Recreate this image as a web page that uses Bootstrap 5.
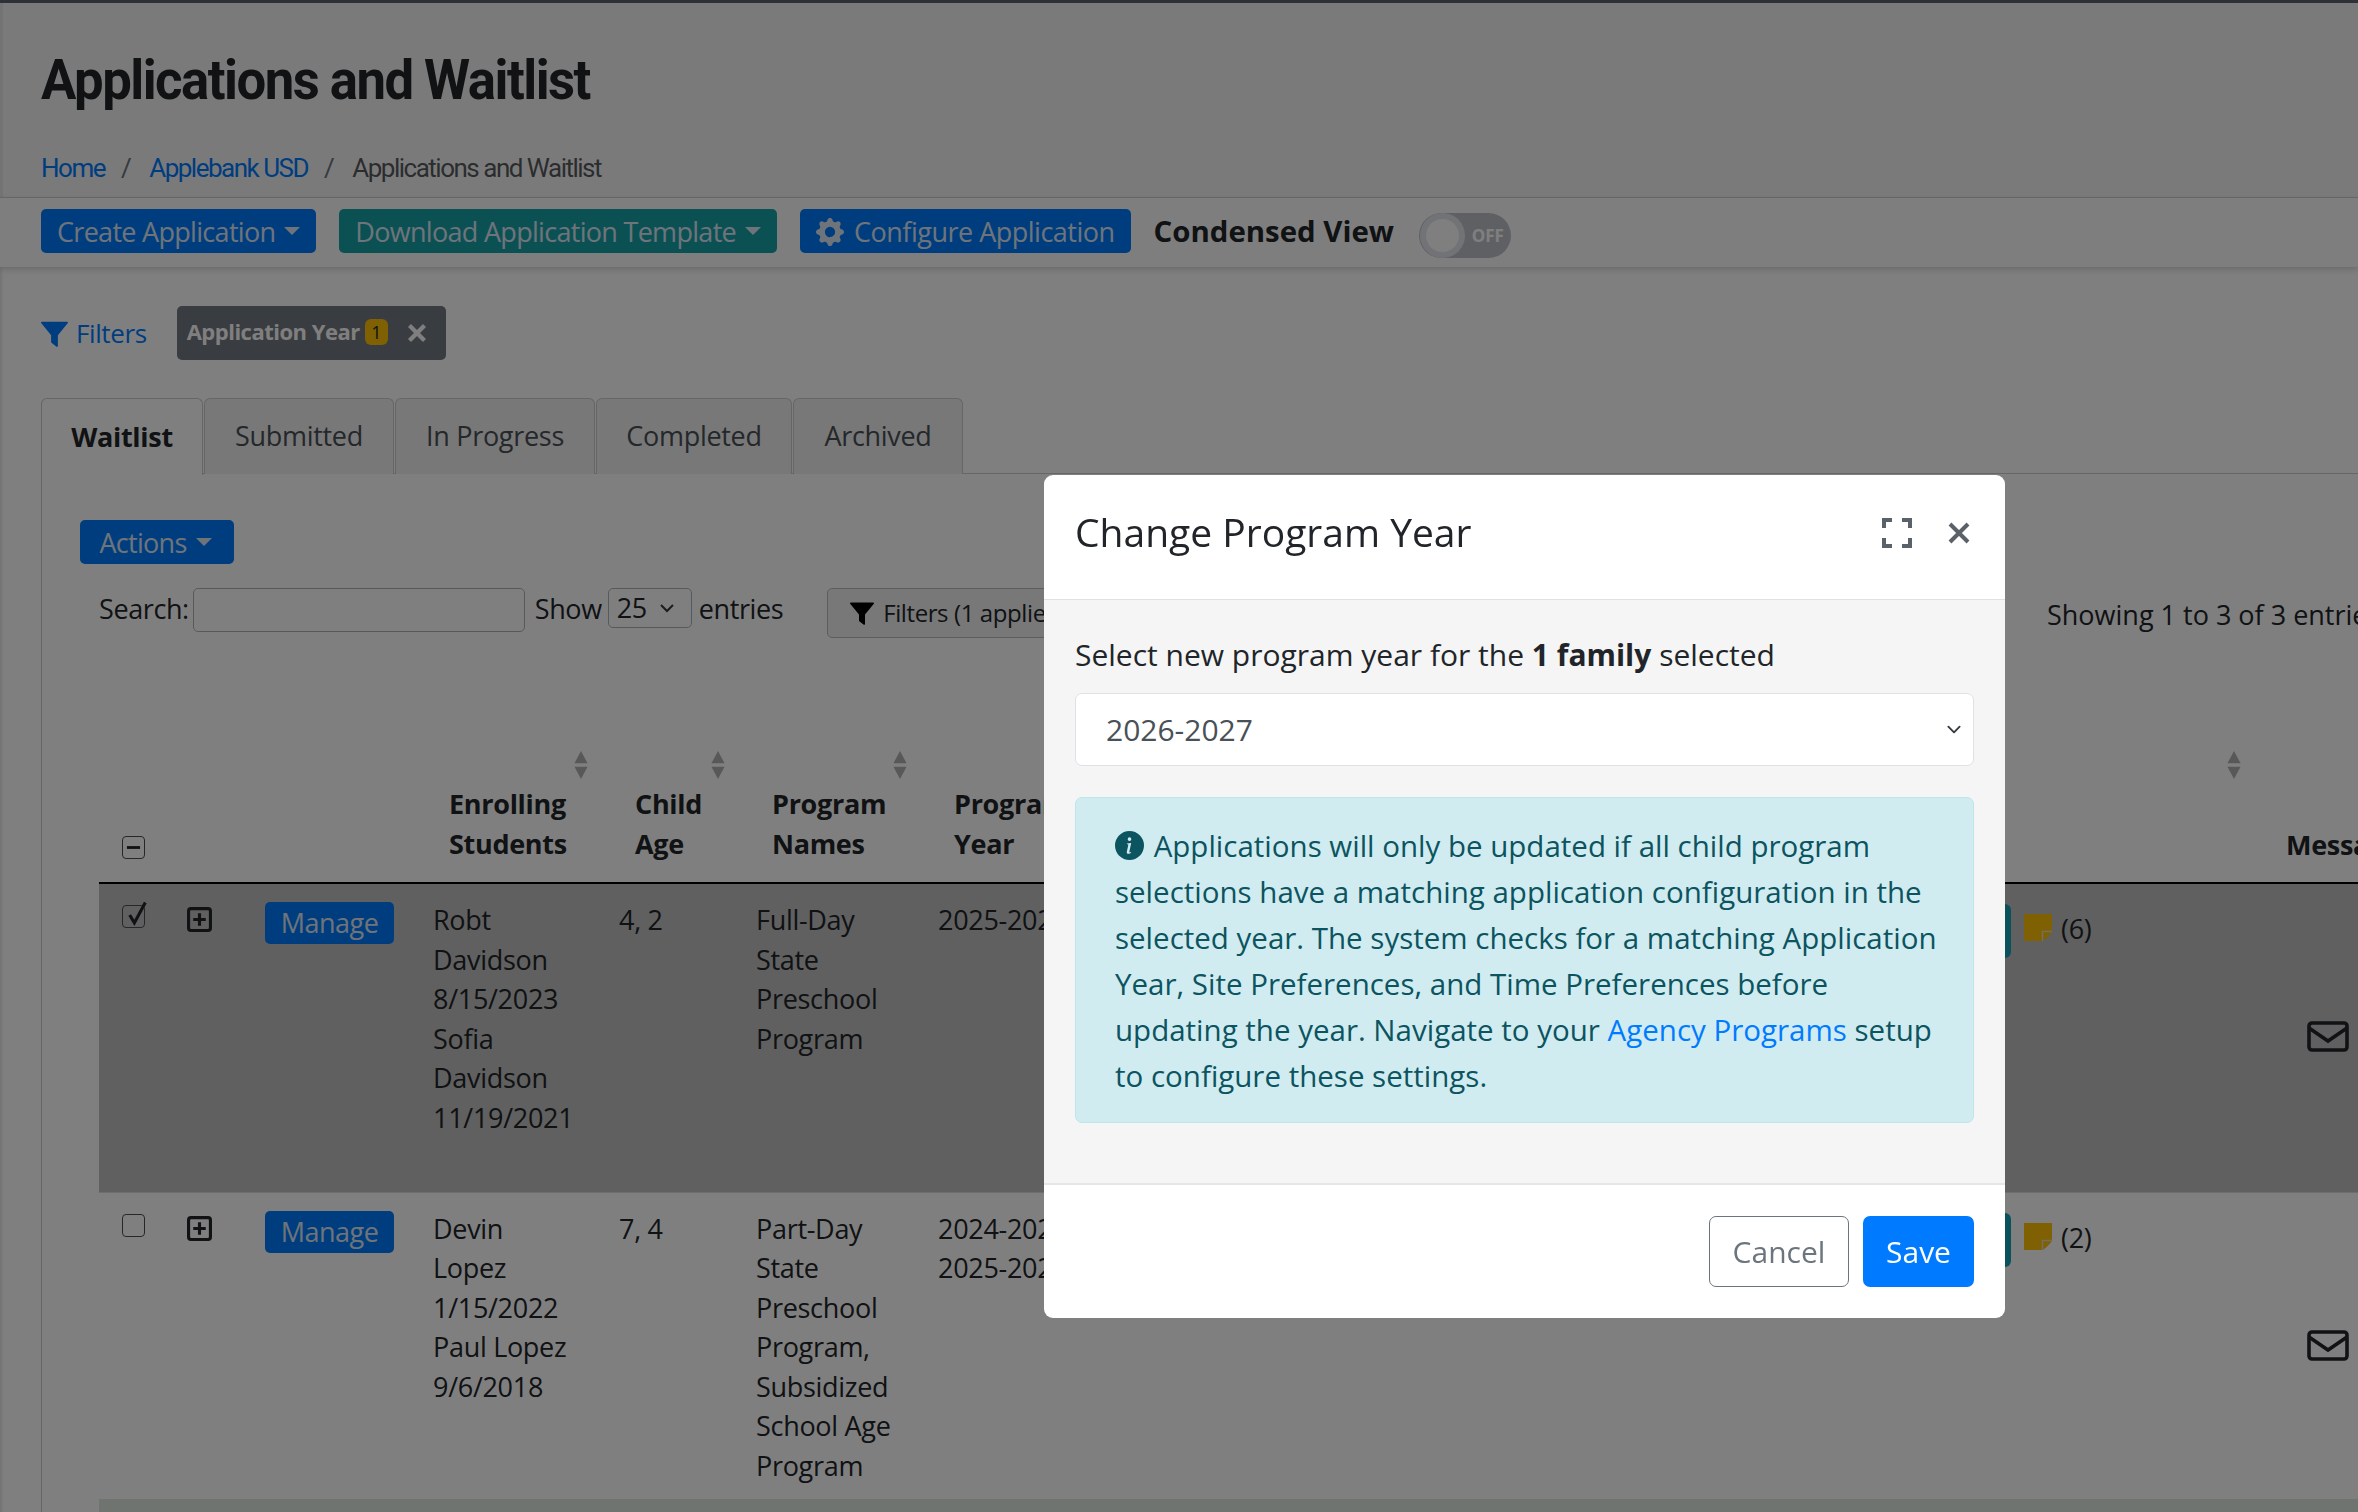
<!DOCTYPE html>
<html lang="en">
<head>
    <meta charset="UTF-8">
    <title>Applications and Waitlist</title>
    <link href="https://cdn.jsdelivr.net/npm/bootstrap@5.3.0/dist/css/bootstrap.min.css" rel="stylesheet">
    <style>
        html, body { height: 100%; overflow: hidden; }
        body { background: #fff; color: #212529; font-family: "Open Sans", "Noto Sans", sans-serif; font-size: 27px; letter-spacing: -.3px; }
        .top-strip { height: 3px; background: #5c6470; }
        .page-head { background: #f5f5f5; padding: 45px 41px 0 38px; height: 194px; border-left: 3px solid #e6e6e6; }
        .page-title { font-family: Roboto, sans-serif; font-weight: 700; font-size: 56px; letter-spacing: -1.6px; margin: 0; line-height: 64px; transform: scaleX(.94); transform-origin: left; white-space: nowrap; }
        .crumbs { margin: 37px 0 0; font-family: Roboto, sans-serif; font-size: 26px; --bs-breadcrumb-divider-color: #6c757d; letter-spacing: -1.5px; }
        .crumbs a { text-decoration: none; color: #007bff; }
        .crumbs .breadcrumb-item + .breadcrumb-item { padding-left: 16px; }
        .crumbs .breadcrumb-item + .breadcrumb-item::before { padding-right: 19px; }
        .tool-bar { background: #fdfdfd; border-top: 1px solid #ccc; height: 70px; padding: 11px 41px 0; gap: 23px; box-shadow: 0 3px 6px rgba(0,0,0,.15); position: relative; }
        .btn-app { font-size: 27px; letter-spacing: -.7px; line-height: 36px; padding: 5px 16px 3px; border-radius: 5px; background: #007bff; border: 0; color: #dfe8f5; height: 44px; white-space: nowrap; }
        .btn-app.dropdown-toggle::after { margin-left: 9px; }
        .btn-tealish { background: #17a2a8; }
        .btn-config { letter-spacing: -.5px; gap: 10px; }
        .condensed-label { font-weight: 700; font-size: 29.4px; letter-spacing: 0; }
        .off-toggle { width: 92px; height: 45px; border-radius: 23px; background: #bfc1c8; margin-left: 2px; margin-top: 4px; padding: 0 7px; color: #fff; font-size: 17px; font-weight: 700; overflow: hidden; letter-spacing: 0; }
        .off-knob { width: 33px; height: 33px; border-radius: 50%; background: #fff; box-shadow: 0 0 0 6px #e4e6ec; }
        .main-area { padding: 39px 0 0 41px; box-shadow: inset 3px 0 3px -1px rgba(0,0,0,.1); }
        .filter-row { height: 54px; gap: 30px; }
        .filter-link { color: #007bff; font-size: 26px; letter-spacing: -.4px; gap: 8px; }
        .chip { background: #737880; color: #fff; font-weight: 700; font-size: 22px; letter-spacing: -.5px; height: 54px; width: 269px; border-radius: 5px; padding: 0 10px; gap: 5px; white-space: nowrap; }
        .chip-label { margin-top: -4px; }
        .chip-num { background: #ffc107; color: #212529; font-size: 18px; font-weight: 400; width: 23px; height: 26px; border-radius: 6px; flex: none; margin-top: -2px; }
        .chip-close { margin-left: 14px; }
        .tab-strip { margin-top: 38px; border-bottom: 1px solid #ccc; gap: 1px; height: 76px; }
        .tab-item { background: #f0f0f0; border: 1px solid #ccc; border-bottom: 0; border-radius: 6px 6px 0 0; height: 76px; color: #495057; }
        .tab-item.is-on { background: #fff; font-weight: 700; color: #212529; height: 77px; position: relative; }
        .tab-body { border-left: 1px solid #ccc; padding: 46px 0 0 38px; }
        .btn-actions { width: 154px; padding-left: 13px; margin-bottom: 1px; }
        .search-row { margin: 23px 0 0 19px; height: 48px; letter-spacing: -.4px; line-height: 42px; }
        .search-box { width: 332px; height: 44px; border: 1px solid #adb5bd; border-radius: 5px; margin: 0 10px 0 4px; background: transparent; }
        .length-box { width: 84px; height: 40px; border: 1px solid #adb5bd; border-radius: 5px; margin: 0 7px 0 6px; padding: 0 8px; gap: 12px; }
        .filter-btn { height: 50px; width: 400px; margin-left: 44px; border: 1px solid #bbb; border-radius: 5px; background: #f0f0f0; padding: 0 22px; font-size: 24px; gap: 9px; white-space: nowrap; }
        .showing-text { position: absolute; left: 2047px; top: 595px; white-space: nowrap; letter-spacing: 0; }
        .app-table { width: 2400px; table-layout: fixed; margin: 50px 0 0 19px; border-collapse: collapse; }
        .app-table th { font-weight: 700; vertical-align: bottom; padding: 0 0 18px 0; line-height: 40px; height: 197px; border-bottom: 2px solid #000; position: relative; }
        .app-table td { vertical-align: top; line-height: 39.5px; padding: 16px 0 0 0; }
        .row-picked td { background: #c0c0c0; height: 309px; }
        .row-plain td { height: 307px; border-top: 1px solid #ddd; }
        .row-next td { background: #dfe9e1; height: 40px; }
        .sort-mark { position: absolute; top: 65px; width: 16px; height: 28px; }
        .tick-box { display: block; width: 23px; height: 23px; margin: 5px 0 0 23px; border: 1px solid #495057; border-radius: 4px; position: relative; }
        .head-box { margin: 0 0 5px 23px; }
        .plus-mark { display: block; margin: 7px 0 0 22px; }
        .btn-manage { width: 129px; height: 42px; padding: 0; line-height: 42px; margin-top: 2px; letter-spacing: -.5px; }
        .note-mark { position: absolute; left: 1086px; top: 30px; width: 28px; height: 27px; }
        .note-count { position: absolute; left: 1123px; top: 25px; }
        .teal-edge { position: absolute; left: 1052px; top: 20px; width: 21px; height: 54px; background: #17a2b8; border-radius: 6px; }
        .mail-mark { position: absolute; left: 1369px; top: 137px; width: 42px; height: 31px; }
        .modal-backdrop { --bs-backdrop-opacity: .5; }
        .modal-spot { --bs-modal-width: 961px; letter-spacing: 0; }
        .modal-spot .modal-dialog { margin: 475px 0 0 1044px; max-width: 961px; }
        .modal-spot .modal-content { border-radius: 9px; border: 0; }
        .spot-head { height: 125px; padding: 0 31px 9px; border-bottom: 1px solid #dee2e6; }
        .spot-title { font-size: 39px; font-weight: 500; margin: 0; }
        .spot-body { background: #f5f5f5; height: 583px; padding: 35px 31px 0; }
        .spot-lead { margin: 0 0 18px; line-height: 40px; font-size: 30px; }
        .year-select { height: 73px; font-size: 30px; padding: 0 30px; border-color: #dee2e6; border-radius: 7px; background-size: 20px 15px; background-position: right 9px center; color: #495057; }
        .info-box { margin: 31px 0 0; padding: 25px 25px 0 39px; height: 326px; line-height: 46px; font-size: 29.5px; border-radius: 7px; background: #d1ecf1; border-color: #bee5eb; color: #0c5460; }
        .info-box a { color: #007bff; text-decoration: none; }
        .info-dot { margin-right: 2px; vertical-align: -3px; }
        .spot-foot { height: 135px; padding: 0 31px 0 0; border-top: 2px solid #e6e6ea; gap: 14px; }
        .btn-cancel, .btn-save { height: 71px; font-size: 30px; border-radius: 7px; }
        .btn-cancel { width: 140px; color: #6c757d; border: 1px solid #6c757d; background: #fff; }
        .btn-save { width: 111px; color: #fff; background: #007bff; border: 0; }
    </style>
</head>
<body>
    <div class="top-strip"></div>
    <div class="page-head">
        <h1 class="page-title">Applications and Waitlist</h1>
        <nav>
            <ol class="breadcrumb crumbs">
                <li class="breadcrumb-item"><a href="#">Home</a></li>
                <li class="breadcrumb-item"><a href="#">Applebank USD</a></li>
                <li class="breadcrumb-item active">Applications and Waitlist</li>
            </ol>
        </nav>
    </div>
    <div class="tool-bar d-flex align-items-start">
        <button class="btn-app dropdown-toggle">Create Application</button>
        <button class="btn-app btn-tealish dropdown-toggle">Download Application Template</button>
        <button class="btn-app btn-config d-flex align-items-center">
            <svg width="28" height="28" viewBox="0 0 16 16" fill="currentColor"><path d="M9.405 1.05c-.413-1.4-2.397-1.4-2.81 0l-.1.34a1.464 1.464 0 0 1-2.105.872l-.31-.17c-1.283-.698-2.686.705-1.987 1.987l.169.311c.446.82.023 1.841-.872 2.105l-.34.1c-1.4.413-1.4 2.397 0 2.81l.34.1a1.464 1.464 0 0 1 .872 2.105l-.17.31c-.698 1.283.705 2.686 1.987 1.987l.311-.169a1.464 1.464 0 0 1 2.105.872l.1.34c.413 1.4 2.397 1.4 2.81 0l.1-.34a1.464 1.464 0 0 1 2.105-.872l.31.17c1.283.698 2.686-.705 1.987-1.987l-.169-.311a1.464 1.464 0 0 1 .872-2.105l.34-.1c1.4-.413 1.4-2.397 0-2.81l-.34-.1a1.464 1.464 0 0 1-.872-2.105l.17-.31c.698-1.283-.705-2.686-1.987-1.987l-.311.169a1.464 1.464 0 0 1-2.105-.872l-.1-.34zM8 10.93a2.929 2.929 0 1 1 0-5.86 2.929 2.929 0 0 1 0 5.858z"/></svg>
            Configure Application
        </button>
        <span class="condensed-label">Condensed View</span>
        <div class="off-toggle d-flex align-items-center justify-content-between">
            <span class="off-knob"></span><span>OFF</span>
        </div>
    </div>
    <div class="main-area">
        <div class="filter-row d-flex align-items-center">
            <div class="filter-link d-flex align-items-center">
                <svg width="27" height="27" viewBox="0 0 16 16" fill="currentColor"><path d="M.5 1h15a.5.5 0 0 1 .4.8L10 9v6.4a.5.5 0 0 1-.8.4l-3-2.3a.5.5 0 0 1-.2-.4V9L.1 1.800A.5.5 0 0 1 .5 1z"/></svg>
                <span>Filters</span>
            </div>
            <div class="chip d-flex align-items-center">
                <span class="chip-label">Application Year</span>
                <span class="chip-num d-flex align-items-center justify-content-center">1</span>
                <svg class="chip-close" width="20" height="20" viewBox="0 0 16 16" fill="none" stroke="currentColor" stroke-width="3.4"><path d="M2 2l12 12M14 2L2 14"/></svg>
            </div>
        </div>
        <div class="tab-strip d-flex">
            <div class="tab-item is-on d-flex align-items-center justify-content-center" style="width:162px">Waitlist</div>
            <div class="tab-item d-flex align-items-center justify-content-center" style="width:190px">Submitted</div>
            <div class="tab-item d-flex align-items-center justify-content-center" style="width:200px">In Progress</div>
            <div class="tab-item d-flex align-items-center justify-content-center" style="width:196px">Completed</div>
            <div class="tab-item d-flex align-items-center justify-content-center" style="width:170px">Archived</div>
        </div>
        <div class="tab-body">
            <button class="btn-app btn-actions dropdown-toggle">Actions</button>
            <div class="search-row d-flex align-items-start">
                <span>Search:</span><span class="search-box"></span>
                <span>Show</span>
                <span class="length-box d-flex align-items-center">25
                    <svg width="16" height="16" viewBox="0 0 16 16" fill="none" stroke="#343a40" stroke-width="2"><path d="M2 5l6 6 6-6"/></svg>
                </span>
                <span>entries</span>
                <span class="filter-btn d-flex align-items-center">
                    <svg width="24" height="24" viewBox="0 0 16 16" fill="#000"><path d="M.5 1h15a.5.5 0 0 1 .4.8L10 9v6.4a.5.5 0 0 1-.8.4l-3-2.3a.5.5 0 0 1-.2-.4V9L.1 1.800A.5.5 0 0 1 .5 1z"/></svg>
                    Filters (1 applied)
                </span>
            </div>
            <table class="app-table">
                <colgroup>
                    <col style="width:66px"><col style="width:100px"><col style="width:168px"><col style="width:186px">
                    <col style="width:137px"><col style="width:182px"><col>
                </colgroup>
                <thead>
                    <tr>
                        <th><span class="tick-box head-box d-flex align-items-center justify-content-center"><svg width="15" height="15" viewBox="0 0 16 16"><path d="M1 8h14" stroke="#212529" stroke-width="3"/></svg></span></th>
                        <th></th>
                        <th></th>
                        <th class="ps-3">Enrolling<br>Students<svg class="sort-mark" style="left:140px" viewBox="0 0 15 32" fill="#b0b0b0"><path d="M7.500 0L15 14H0zM0 18h15L7.500 32z"/></svg></th>
                        <th class="ps-3">Child<br>Age<svg class="sort-mark" style="left:91px" viewBox="0 0 15 32" fill="#b0b0b0"><path d="M7.500 0L15 14H0zM0 18h15L7.500 32z"/></svg></th>
                        <th class="ps-3">Program<br>Names<svg class="sort-mark" style="left:136px" viewBox="0 0 15 32" fill="#b0b0b0"><path d="M7.500 0L15 14H0zM0 18h15L7.500 32z"/></svg></th>
                        <th class="ps-3">Program<br>Year
                            <svg class="sort-mark" style="left:1288px" viewBox="0 0 15 32" fill="#b0b0b0"><path d="M7.500 0L15 14H0zM0 18h15L7.500 32z"/></svg>
                            <span class="position-absolute" style="left:1348px;bottom:17px">Messages</span>
                        </th>
                    </tr>
                </thead>
                <tbody>
                    <tr class="row-picked">
                        <td><span class="tick-box"><svg class="position-absolute" style="left:2px;top:-6px" width="25" height="27" viewBox="0 0 16 16" fill="none" stroke="#212529" stroke-width="2"><path d="M3 9l3 5L13 1"/></svg></span></td>
                        <td><svg class="plus-mark" width="25" height="25" viewBox="0 0 16 16" fill="none" stroke="#212529" stroke-width="2"><rect x="1" y="1" width="14" height="14" rx="1.500"/><path d="M8 4v8M4 8h8"/></svg></td>
                        <td><button class="btn-app btn-manage">Manage</button></td>
                        <td>Robt<br>Davidson<br>8/15/2023<br>Sofia<br>Davidson<br>11/19/2021</td>
                        <td>4, 2</td>
                        <td>Full-Day<br>State<br>Preschool<br>Program</td>
                        <td class="position-relative">2025-2026
                            <span class="teal-edge"></span>
                            <svg class="note-mark" viewBox="0 0 28 27"><path d="M0 0h28v18l-9 9H0z" fill="#ffc107"/><path d="M18.500 27v-9.500H28" fill="none" stroke="#e8dcc0" stroke-width="1.500"/><path d="M20.500 26v-6.500H27z" fill="#ffc107"/></svg>
                            <span class="note-count">(6)</span>
                            <svg class="mail-mark" viewBox="0 0 42 31" fill="none" stroke="#212529" stroke-width="3.600"><rect x="2" y="2" width="38" height="27" rx="3"/><path d="M2 7l19 13L40 7"/></svg>
                        </td>
                    </tr>
                    <tr class="row-plain">
                        <td><span class="tick-box"></span></td>
                        <td><svg class="plus-mark" width="25" height="25" viewBox="0 0 16 16" fill="none" stroke="#212529" stroke-width="2"><rect x="1" y="1" width="14" height="14" rx="1.500"/><path d="M8 4v8M4 8h8"/></svg></td>
                        <td><button class="btn-app btn-manage">Manage</button></td>
                        <td>Devin<br>Lopez<br>1/15/2022<br>Paul Lopez<br>9/6/2018</td>
                        <td>7, 4</td>
                        <td>Part-Day<br>State<br>Preschool<br>Program,<br>Subsidized<br>School Age<br>Program</td>
                        <td class="position-relative">2024-2025<br>2025-2026
                            <span class="teal-edge"></span>
                            <svg class="note-mark" viewBox="0 0 28 27"><path d="M0 0h28v18l-9 9H0z" fill="#ffc107"/><path d="M18.500 27v-9.500H28" fill="none" stroke="#e8dcc0" stroke-width="1.500"/><path d="M20.500 26v-6.500H27z" fill="#ffc107"/></svg>
                            <span class="note-count">(2)</span>
                            <svg class="mail-mark" viewBox="0 0 42 31" fill="none" stroke="#212529" stroke-width="3.600"><rect x="2" y="2" width="38" height="27" rx="3"/><path d="M2 7l19 13L40 7"/></svg>
                        </td>
                    </tr>
                    <tr class="row-next"><td colspan="7"></td></tr>
                </tbody>
            </table>
        </div>
    </div>
    <span class="showing-text">Showing 1 to 3 of 3 entries</span>

    <div class="modal-backdrop show"></div>
    <div class="modal modal-spot d-block">
        <div class="modal-dialog">
            <div class="modal-content">
                <div class="spot-head d-flex align-items-center justify-content-between">
                    <h5 class="spot-title">Change Program Year</h5>
                    <div class="d-flex align-items-center me-1" style="gap:36px">
                        <svg width="30" height="30" viewBox="0 0 30 30" fill="none" stroke="#5a6169" stroke-width="4"><path d="M2 10V2h8M20 2h8v8M28 20v8h-8M10 28H2v-8"/></svg>
                        <svg width="22" height="22" viewBox="0 0 22 22" fill="none" stroke="#5a6169" stroke-width="4"><path d="M2 2l18 18M20 2L2 20"/></svg>
                    </div>
                </div>
                <div class="spot-body">
                    <p class="spot-lead">Select new program year for the <strong>1 family</strong> selected</p>
                    <select class="form-select year-select"><option>2026-2027</option></select>
                    <div class="alert info-box" role="alert">
                        <svg class="info-dot" width="29" height="29" viewBox="0 0 16 16" fill="#0c5460"><path d="M8 16A8 8 0 1 0 8 0a8 8 0 0 0 0 16zm.93-9.412-1 4.705c-.07.34.029.533.304.533.194 0 .487-.07.686-.246l-.088.416c-.287.346-.92.598-1.465.598-.703 0-1.002-.422-.808-1.319l.738-3.468c.064-.293.006-.399-.287-.47l-.451-.081.082-.381 2.29-.287zM8 5.500a1 1 0 1 1 0-2 1 1 0 0 1 0 2z"/></svg>
                        Applications will only be updated if all child program selections have a matching application configuration in the selected year. The system checks for a matching Application Year, Site Preferences, and Time Preferences before updating the year. Navigate to your <a href="#">Agency Programs</a> setup to configure these settings.
                    </div>
                </div>
                <div class="spot-foot d-flex align-items-center justify-content-end">
                    <button class="btn btn-cancel">Cancel</button>
                    <button class="btn btn-save">Save</button>
                </div>
            </div>
        </div>
    </div>

    <script src="https://cdn.jsdelivr.net/npm/bootstrap@5.3.0/dist/js/bootstrap.bundle.min.js"></script>
</body>
</html>
